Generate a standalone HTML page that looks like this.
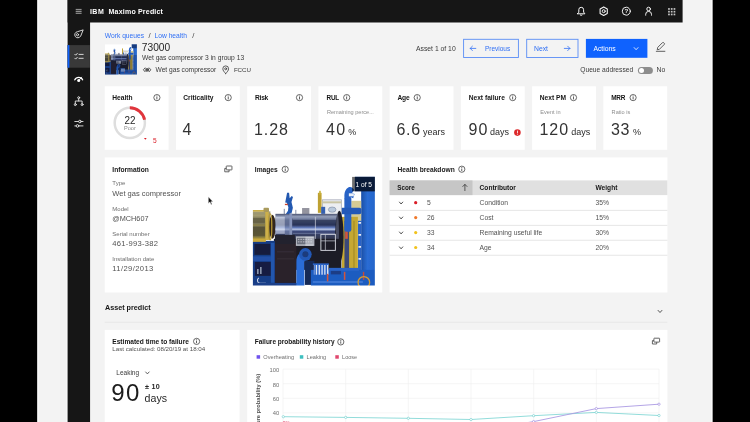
<!DOCTYPE html>
<html lang="en"><head><meta charset="utf-8"><title>IBM Maximo Predict</title>
<style>
*{box-sizing:border-box;margin:0;padding:0}
html,body{width:750px;height:422px;overflow:hidden;background:#000}
body{position:relative;font-family:"Liberation Sans",Arial,sans-serif;color:#161616;font-size:7px}
.abs,.t,.card,svg.i{position:absolute}
.t{white-space:nowrap;line-height:1;transform:translateY(-50%)}
.b{font-weight:bold}
.card{background:#fff}
.lbl{font-weight:bold;font-size:6.65px;color:#161616}
.sub{font-size:5.6px;color:#8d8d8d}
.big{font-size:16px;color:#333;letter-spacing:.6px}
.unit{font-size:9px;color:#2b2b2b}
.k{font-size:6px;color:#6f6f6f}
.v{font-size:7.6px;color:#525252}
.cell{font-size:6.75px;color:#525252}
.link{color:#2f6ff5}
svg.i{overflow:visible}
#root{position:absolute;left:0;top:0;width:750px;height:422px;overflow:hidden;filter:blur(.5px);will-change:transform}
</style></head><body>
<div id="root">
<svg class="i" style="left:0;top:0" width="750" height="422" viewBox="0 0 750 422">
<rect x="37.40" y="0.00" width="675.00" height="422.00" fill="#f3f3f3"/>
<rect x="37.40" y="0.00" width="1.00" height="422.00" fill="#ffffff"/>
<rect x="711.40" y="0.00" width="1.00" height="422.00" fill="#ffffff"/>
<rect x="66.60" y="0.00" width="1.00" height="422.00" fill="#fdfdfd"/>
<rect x="67.60" y="0.00" width="615.00" height="422.00" fill="#f3f3f3"/>
<rect x="90.10" y="22.50" width="592.50" height="0.90" fill="#fbfbfb"/>
<rect x="90.10" y="22.50" width="0.90" height="400.00" fill="#fbfbfb"/>
<rect x="67.60" y="0.00" width="615.00" height="22.50" fill="#161616"/>
<rect x="67.60" y="0.00" width="22.50" height="422.00" fill="#161616"/>
<rect x="67.60" y="45.10" width="22.30" height="22.60" fill="#393939"/>
<rect x="67.60" y="45.10" width="1.80" height="22.60" fill="#0f62fe"/>
<rect x="463.6" y="39.3" width="54.8" height="18.2" fill="none" stroke="#5a8df5" stroke-width=".9"/>
<rect x="526.7" y="39.3" width="51.3" height="18.2" fill="none" stroke="#5a8df5" stroke-width=".9"/>
<rect x="585.90" y="38.90" width="61.50" height="18.90" fill="#0f62fe"/>
<rect x="637.9" y="66.9" width="15" height="7.2" rx="3.6" fill="#8d8d8d"/>
<circle cx="641.5" cy="70.5" r="2.5" fill="#fff"/>
<rect x="104.70" y="86.30" width="63.90" height="63.50" fill="#fff"/>
<rect x="175.93" y="86.30" width="63.90" height="63.50" fill="#fff"/>
<rect x="247.16" y="86.30" width="63.90" height="63.50" fill="#fff"/>
<rect x="318.39" y="86.30" width="63.90" height="63.50" fill="#fff"/>
<rect x="389.62" y="86.30" width="63.90" height="63.50" fill="#fff"/>
<rect x="460.85" y="86.30" width="63.90" height="63.50" fill="#fff"/>
<rect x="532.08" y="86.30" width="63.90" height="63.50" fill="#fff"/>
<rect x="603.31" y="86.30" width="63.90" height="63.50" fill="#fff"/>
<rect x="104.70" y="157.40" width="135.00" height="135.10" fill="#fff"/>
<rect x="247.20" y="157.40" width="135.10" height="135.10" fill="#fff"/>
<rect x="389.60" y="157.40" width="277.80" height="135.10" fill="#fff"/>
<rect x="104.70" y="329.90" width="134.90" height="100.00" fill="#fff"/>
<rect x="247.20" y="329.90" width="420.20" height="100.00" fill="#fff"/>
<circle cx="517.4" cy="132.6" r="3.3" fill="#dc2a2c"/>
<rect x="389.60" y="180.40" width="277.80" height="14.70" fill="#e0e0e0"/>
<rect x="389.60" y="180.40" width="82.90" height="14.70" fill="#c6c6c6"/>
<rect x="389.60" y="209.90" width="277.80" height="0.80" fill="#e0e0e0"/>
<rect x="389.60" y="224.90" width="277.80" height="0.80" fill="#e0e0e0"/>
<rect x="389.60" y="239.80" width="277.80" height="0.80" fill="#e0e0e0"/>
<rect x="389.60" y="254.80" width="277.80" height="0.80" fill="#e0e0e0"/>
<circle cx="415.7" cy="202.7" r="1.6" fill="#da1e28"/>
<circle cx="415.7" cy="217.6" r="1.6" fill="#f0782a"/>
<circle cx="415.7" cy="232.6" r="1.6" fill="#f1c21b"/>
<circle cx="415.7" cy="247.5" r="1.6" fill="#f1c21b"/>
<rect x="104.70" y="321.80" width="562.70" height="0.80" fill="#e4e4e4"/>
<rect x="256.60" y="355.20" width="3.50" height="3.50" fill="#6f52ed"/>
<rect x="299.80" y="355.20" width="3.50" height="3.50" fill="#3dbfbf"/>
<rect x="335.30" y="355.20" width="3.50" height="3.50" fill="#e0486e"/>
</svg>
<!-- header -->
<!-- sidebar -->

<span class="t b" id="ibm" style="left:89.9px;top:11.3px;color:#fff;font-size:7px;letter-spacing:.5px">IBM</span>
<span class="t b" id="mp" style="left:108.6px;top:11.3px;color:#fff;font-size:7px;letter-spacing:.2px">Maximo Predict</span>

<!-- breadcrumb -->
<span class="t link" id="bc1" style="left:104.8px;top:35.6px;font-size:6.7px">Work queues</span>
<span class="t" style="left:148.4px;top:35.7px;font-size:7.6px;color:#393939">/</span>
<span class="t link" id="bc2" style="left:154.5px;top:35.6px;font-size:6.7px">Low health</span>
<span class="t" style="left:192.2px;top:35.7px;font-size:7.6px;color:#393939">/</span>

<span class="t" id="ttl" style="left:141.8px;top:47.5px;font-size:10.2px;color:#262626">73000</span>
<span class="t" id="sub1" style="left:142px;top:57.7px;font-size:6.7px;color:#393939">Wet gas compressor 3 in group 13</span>
<span class="t" id="sub2" style="left:155.5px;top:69.7px;font-size:6.65px;color:#393939">Wet gas compressor</span>
<span class="t" id="sub3" style="left:233.9px;top:69.7px;font-size:6.2px;color:#393939;letter-spacing:-.05px">FCCU</span>

<!-- top right controls -->
<span class="t" id="aof" style="left:416px;top:48.5px;font-size:6.8px;color:#393939">Asset 1 of 10</span>
<span class="t link" id="prev" style="left:484.9px;top:49.0px;font-size:6.5px">Previous</span>
<span class="t link" id="next" style="left:534px;top:49.0px;font-size:6.8px">Next</span>
<span class="t" id="act" style="left:593.4px;top:49.0px;font-size:6.8px;color:#fff">Actions</span>
<span class="t" id="qa" style="left:580.3px;top:70px;font-size:6.65px;color:#393939">Queue addressed</span>
<span class="t" id="no" style="left:656.5px;top:70.2px;font-size:6.8px;color:#393939">No</span>

<!-- KPI cards -->

<span class="t lbl" id="l1" style="left:112.3px;top:98px">Health</span>
<span class="t lbl" id="l2" style="left:183.3px;top:98px">Criticality</span>
<span class="t lbl" id="l3" style="left:254.9px;top:98px;letter-spacing:-.2px">Risk</span>
<span class="t lbl" id="l4" style="left:326.6px;top:98px;font-size:6.4px;letter-spacing:-.3px">RUL</span>
<span class="t lbl" id="l5" style="left:397.5px;top:98px;letter-spacing:-.2px">Age</span>
<span class="t lbl" id="l6" style="left:468.7px;top:98px">Next failure</span>
<span class="t lbl" id="l7" style="left:539.8px;top:98px">Next PM</span>
<span class="t lbl" id="l8" style="left:611.2px;top:98px;font-size:6.4px;letter-spacing:-.2px">MRR</span>

<span class="t sub" id="s4" style="left:326.9px;top:112.7px">Remaining perce...</span>
<span class="t sub" id="s7" style="left:540.3px;top:112.7px">Event in</span>
<span class="t sub" id="s8" style="left:611.6px;top:112.7px">Ratio is</span>

<span class="t" id="g22" style="left:124.4px;top:120.7px;font-size:9.9px;color:#262626;transform:translateY(-50%) scaleY(1.1)">22</span>
<span class="t" id="gpoor" style="left:124px;top:128.9px;font-size:5.6px;color:#8d8d8d">Poor</span>
<span class="t" id="g5" style="left:153px;top:140.8px;font-size:6.6px;color:#da1e28">5</span>

<span class="t big" id="b2" style="left:182.5px;top:130.4px">4</span>
<span class="t big" id="b3" style="left:254px;letter-spacing:.9px;top:130.4px">1.28</span>
<span class="t big" id="b4" style="left:326px;letter-spacing:1.4px;top:130.4px">40</span>
<span class="t unit" id="u4" style="left:348.2px;top:131.6px">%</span>
<span class="t big" id="b5" style="left:396.6px;top:130.4px">6.6</span>
<span class="t unit" id="u5" style="left:423px;top:131.6px">years</span>
<span class="t big" id="b6" style="left:468.4px;letter-spacing:1.2px;top:130.4px">90</span>
<span class="t unit" id="u6" style="left:490px;top:131.6px">days</span>
<span class="t big" id="b7" style="left:539.4px;letter-spacing:1px;top:130.4px">120</span>
<span class="t unit" id="u7" style="left:571.2px;top:131.6px">days</span>
<span class="t big" id="b8" style="left:611px;top:130.4px">33</span>
<span class="t unit" id="u8" style="left:633px;top:131.6px">%</span>

<!-- row 2 cards -->

<span class="t lbl" id="inf" style="left:112.3px;top:169.9px">Information</span>
<span class="t k" style="left:112.3px;top:183.2px">Type</span>
<span class="t v" id="v1" style="left:112.3px;top:193.6px;font-size:7.5px">Wet gas compressor</span>
<span class="t k" style="left:112.3px;top:209.2px">Model</span>
<span class="t v" id="v2" style="left:112.3px;top:219.0px;font-size:7.3px">@MCH607</span>
<span class="t k" style="left:112.3px;top:234.3px">Serial number</span>
<span class="t v" id="v3" style="left:112.3px;top:243.7px;letter-spacing:.27px">461-993-382</span>
<span class="t k" style="left:112.3px;top:258.9px">Installation date</span>
<span class="t v" id="v4" style="left:112.3px;top:268.6px;letter-spacing:.4px">11/29/2013</span>

<span class="t lbl" id="img" style="left:254.8px;top:169.9px">Images</span>
<span class="t lbl" id="hb" style="left:397.5px;top:169.9px">Health breakdown</span>

<!-- table -->
<span class="t b" id="th1" style="left:397.2px;top:187.6px;font-size:6.3px">Score</span>
<span class="t b" id="th2" style="left:479.6px;top:187.6px;font-size:6.6px">Contributor</span>
<span class="t b" id="th3" style="left:595.5px;top:187.6px;font-size:6.6px">Weight</span>

<span class="t cell" style="left:427.1px;top:202.7px">5</span>
<span class="t cell" style="left:427.1px;top:217.6px">26</span>
<span class="t cell" style="left:427.1px;top:232.6px">33</span>
<span class="t cell" style="left:427.1px;top:247.5px">34</span>
<span class="t cell" id="c1" style="left:479.6px;top:202.7px">Condition</span>
<span class="t cell" id="c2" style="left:479.6px;top:217.6px">Cost</span>
<span class="t cell" id="c3" style="left:479.6px;top:232.6px">Remaining useful life</span>
<span class="t cell" id="c4" style="left:479.6px;top:247.5px">Age</span>
<span class="t cell" id="w1" style="left:595.5px;top:202.7px">35%</span>
<span class="t cell" style="left:595.5px;top:217.6px">15%</span>
<span class="t cell" style="left:595.5px;top:232.6px">30%</span>
<span class="t cell" style="left:595.5px;top:247.5px">20%</span>

<!-- Asset predict -->
<span class="t b" id="ap" style="left:105px;top:307.5px;font-size:7.2px">Asset predict</span>


<span class="t lbl" id="etf" style="left:112.3px;top:341.6px;font-size:6.6px">Estimated time to failure</span>
<span class="t" id="lc" style="left:112.3px;top:349px;font-size:6.2px;color:#525252">Last calculated: 08/20/19 at 18:04</span>
<span class="t" id="leak" style="left:116.3px;top:372.7px;font-size:6.5px;color:#393939">Leaking</span>
<span class="t" id="b90" style="left:111.3px;top:392.8px;font-size:24px;color:#1c1c1c;letter-spacing:1.4px">90</span>
<span class="t b" id="pm" style="left:145px;top:387px;font-size:7.2px;color:#262626;letter-spacing:.3px">± 10</span>
<span class="t" id="days" style="left:144.6px;top:397.6px;font-size:10.6px;color:#262626">days</span>

<span class="t lbl" id="fph" style="left:254.7px;top:342px;font-size:6.5px">Failure probability history</span>
<span class="t" id="lg1" style="left:263.3px;top:357.7px;font-size:5.65px;color:#6f6f6f">Overheating</span>
<span class="t" id="lg2" style="left:306.6px;top:357.7px;font-size:5.6px;color:#6f6f6f">Leaking</span>
<span class="t" id="lg3" style="left:342.1px;top:357.7px;font-size:5.5px;color:#6f6f6f">Loose</span>


<svg width="0" height="0" style="position:absolute">
<defs>
<linearGradient id="cyl" x1="0" y1="0" x2="0" y2="1">
<stop offset="0" stop-color="#4a5370"/><stop offset=".1" stop-color="#9aa5c0"/><stop offset=".2" stop-color="#3a4464"/>
<stop offset=".36" stop-color="#2a3458"/><stop offset=".44" stop-color="#5c74b4"/><stop offset=".5" stop-color="#b9c6e6"/><stop offset=".56" stop-color="#3c4a7c"/>
<stop offset=".75" stop-color="#343a54"/><stop offset="1" stop-color="#1e2030"/>
</linearGradient>
<linearGradient id="colr" x1="0" y1="0" x2="1" y2="0">
<stop offset="0" stop-color="#1c4fa6"/><stop offset=".4" stop-color="#2a6cd4"/><stop offset="1" stop-color="#2262c6"/>
</linearGradient>
<linearGradient id="cage" x1="0" y1="0" x2="0" y2="1">
<stop offset="0" stop-color="#a39d76"/><stop offset=".3" stop-color="#8a8560"/><stop offset=".6" stop-color="#6c6748"/><stop offset=".88" stop-color="#77703f"/><stop offset="1" stop-color="#cfae3a"/>
</linearGradient>
<filter id="bl" x="-5%" y="-5%" width="110%" height="110%"><feGaussianBlur stdDeviation=".75"/></filter>
<symbol id="pic" viewBox="0 0 122 108.5" preserveAspectRatio="none">
<rect width="122" height="108.5" fill="#fff"/>
<g filter="url(#bl)">
<!-- right blue column -->
<rect x="108.3" y="-2" width="16" height="114" fill="url(#colr)"/>
<rect x="102" y="-2" width="22" height="16.5" fill="#173a80"/>
<rect x="105" y="40" width="3.4" height="56" fill="#2a62c4"/>
<path d="M105.6 58h2.600M105.6 70h2.600M105.6 82h2.600M105.6 46h2.6" stroke="#e6ecf6" stroke-width="1.6"/>
<!-- yellow panel -->
<rect x="98.5" y="24" width="9.8" height="20" fill="#d6cb94"/>
<rect x="89" y="40" width="16" height="54.5" fill="#c6a830"/>
<rect x="91.6" y="44" width="4.6" height="50" fill="#3b4978"/>
<rect x="92.3" y="51" width="2.6" height="11" fill="#d4563a"/>
<rect x="100.5" y="44" width="1.2" height="48" fill="#a48c28"/>
<!-- blue vertical pipe + valve -->
<rect x="91.5" y="20" width="7" height="35" rx="2" fill="#2560c4"/>
<path d="M91.8 22c-1-6 1-10 4-11.5 3-.8 4.5 .8 5.5 2.800l-2 2.6 2.4 1.2-1.4 4.4-3.3-1.500v4z" fill="#2762c6"/>
<rect x="87" y="31" width="21.5" height="6.4" rx="2" fill="#2259b8"/>
<rect x="96" y="16.5" width="5" height="3" fill="#e9eef7"/>
<!-- frame and gauge -->
<rect x="69.5" y="23" width="19" height="15.5" fill="#eceef2" stroke="#a9aebb" stroke-width=".8"/>
<rect x="69.5" y="24.5" width="19" height="2" fill="#c9c4a4"/>
<ellipse cx="79.3" cy="32.8" rx="3.8" ry="2.6" fill="#b9c9dc" stroke="#7b879f" stroke-width=".6"/>
<!-- yellow post -->
<rect x="65" y="16" width="3.7" height="20" fill="#bea132"/>
<rect x="66.3" y="14" width="1.6" height="4" fill="#c9b238"/>
<rect x="68.3" y="30" width="4" height="7" fill="#3560b0"/>
<!-- blue valve top-left -->
<path d="M34.2 16l2 0 .6 5.5 2-2.2 1.3 1-1.5 5 1.4 5.5-1.2 5-5 3.6-1.5-1.2 2.8-4.2 .4-3.5-1.6-4.5-1.6-.4z" fill="#2458b0"/>
<rect x="32" y="27" width="3" height="1.3" fill="#c4432f"/>
<!-- small bits on top of cylinder -->
<rect x="49.2" y="31.2" width="7.3" height="7" fill="#94949f"/>
<rect x="30.8" y="32" width="1.3" height="6" fill="#9aa3b8"/>
<rect x="42.3" y="33" width="1.2" height="5" fill="#9aa3b8"/>
<!-- left cage -->
<rect x="-1" y="34.5" width="18.5" height="28.5" fill="url(#cage)"/>
<rect x="-1" y="37.5" width="13" height="2" fill="#a39b70"/>
<rect x="-1" y="41" width="13" height="5" fill="#5a553c" opacity=".7"/>
<rect x="-1" y="50" width="13" height="9" fill="#504a30" opacity=".7"/>
<rect x="-1" y="47.5" width="13" height="1.6" fill="#8a7e48"/>
<rect x="12.4" y="33.5" width="3.4" height="29.5" fill="#cdb048"/>
<rect x="-1" y="33.2" width="14" height="1.6" fill="#c8ac44"/>
<rect x="10.6" y="31" width="5.5" height="4.2" rx="1" fill="#a99a5c"/>
<ellipse cx="19.5" cy="50" rx="3.2" ry="12" fill="#33261f"/>
<ellipse cx="17.3" cy="50" rx="1.6" ry="13" fill="none" stroke="#b89a34" stroke-width="1.3"/>
<!-- cylinder -->
<rect x="22.5" y="37" width="62" height="31" fill="url(#cyl)"/>
<rect x="23" y="40" width="9" height="17" fill="#dfe6f6" opacity=".6"/>
<rect x="32" y="38" width="5" height="26" fill="#7f8db6" opacity=".6"/>
<rect x="36.5" y="36.5" width="2.8" height="32" fill="#8794ba"/>
<rect x="40" y="41.5" width="44" height="1.2" fill="#8c99bc" opacity=".7"/>
<rect x="40" y="56" width="44" height="1" fill="#7d8ab0" opacity=".6"/>
<rect x="62" y="40" width="1.1" height="28" fill="#d7dbe6" opacity=".6"/>
<!-- dark ring -->
<ellipse cx="86.5" cy="60" rx="4.2" ry="26" fill="#1f1f2a"/>
<ellipse cx="84.6" cy="56" rx="1.5" ry="19" fill="#6a7394" opacity=".55"/>
<!-- dark lower center -->
<rect x="21" y="62" width="67.5" height="31" fill="#1e1e28"/>
<rect x="21" y="66" width="22.5" height="44" fill="#2a2129"/>
<rect x="22" y="58" width="20" height="9" fill="#23242f"/>
<path d="M24 75h17M24 82h17" stroke="#3c3640" stroke-width=".8"/>
<rect x="43" y="59.5" width="18.5" height="9.5" fill="#b9bdc7"/>
<rect x="44" y="61" width="16.5" height="6.5" fill="#4a4f5e" opacity=".7"/>
<path d="M45 62.500h14M45 65h14" stroke="#e1e3e8" stroke-width=".7" stroke-dasharray="1.5 1"/>
<rect x="68" y="57.5" width="14.5" height="16" fill="none" stroke="#d9dce4" stroke-width=".9"/>
<path d="M72.5 57.500v16M68 64h14.5" stroke="#c4c8d2" stroke-width=".7"/>
<rect x="52.5" y="60" width="8" height="9" fill="#dfe2e9" opacity=".55"/>
<!-- left bottom blue -->
<rect x="-1" y="64" width="23" height="46" fill="#173d86"/>
<rect x="-1" y="62" width="14" height="3" fill="#c9a93a"/>
<rect x="1.5" y="67" width="16" height="11" fill="#131d3c"/>
<rect x="0" y="79.5" width="20" height="5" fill="#2050a6"/>
<rect x="2" y="85" width="16" height="14" fill="#121f42"/>
<path d="M5 92v5M8 90v7" stroke="#d9e2f2" stroke-width="1"/>
<path d="M6 101a3 3 0 0 0 1 5.500h6" stroke="#d3dbec" stroke-width="1.1" fill="none"/>
<rect x="18" y="66" width="3.5" height="40" fill="#2256ac"/>
<rect x="0" y="106" width="44" height="4" fill="#1a3f8a"/>
<!-- blue elbow pipe -->
<path d="M43.5 112V85c0-7 4-10.5 10-10.500h3v8.500h-2.500c-1.6 0-2.5 1-2.5 2.600v26.400z" fill="#2a6cd6"/>
<circle cx="52.5" cy="77.5" r="6.3" fill="#2258b6"/>
<circle cx="52.5" cy="77.5" r="3" fill="#1a3a7c"/>
<rect x="52" y="84" width="9.5" height="24" fill="#182a56"/>
<!-- base / railing -->
<rect x="58" y="93" width="66" height="17" fill="#1f5cc0"/>
<rect x="61" y="87.3" width="14.6" height="10.5" fill="#dde5f4"/>
<path d="M62.2 87v11M65 87v11M67.8 87v11M70.6 87v11M73.4 87v11" stroke="#2a64c8" stroke-width="1.5"/>
<rect x="60" y="86.5" width="16" height="1.6" fill="#2a64c8"/>
<rect x="76" y="91" width="30" height="3" fill="#2a64c8"/>
<rect x="78" y="94" width="10" height="3.5" fill="#1b3e86"/>
<rect x="60" y="104.5" width="50" height="1.2" fill="#5b8fe6" opacity=".8"/>
<rect x="74" y="97" width="1.5" height="7.5" fill="#d1543c"/>
<rect x="91" y="95" width="1.5" height="8" fill="#d1543c"/>
<rect x="110" y="95" width="1.4" height="8" fill="#c2483a"/>
<circle cx="111" cy="105.5" r="5.8" fill="none" stroke="#d79a2c" stroke-width="1.3"/>
</g>
</symbol>
</defs>
</svg>
<svg class="i" style="left:0;top:0" width="750" height="422" viewBox="0 0 750 422"><use href="#pic" x="252.9" y="176.8" width="121.95" height="108.6"/><rect x="352.1" y="176.9" width="22.75" height="14.4" fill="#000" opacity=".56"/><use href="#pic" x="105" y="44.2" width="31.9" height="30.3"/><rect x="105" y="55" width="31.9" height="19.5" fill="#0a1840" opacity=".25"/></svg>
<span class="t" id="oneof" style="left:355.5px;top:185px;font-size:6.6px;color:#fff">1 of 5</span>
<svg class="i" style="left:0;top:0;font-family:'Liberation Sans',Arial,sans-serif" width="750" height="422" viewBox="0 0 750 422">
<path d="M283.0 369.1V422" stroke="#efefef" stroke-width=".6"/>
<path d="M345.7 369.1V422" stroke="#efefef" stroke-width=".6"/>
<path d="M408.3 369.1V422" stroke="#efefef" stroke-width=".6"/>
<path d="M471.0 369.1V422" stroke="#efefef" stroke-width=".6"/>
<path d="M533.7 369.1V422" stroke="#efefef" stroke-width=".6"/>
<path d="M596.4 369.1V422" stroke="#efefef" stroke-width=".6"/>
<path d="M659.0 369.1V422" stroke="#efefef" stroke-width=".6"/>
<path d="M283 369.1H659" stroke="#efefef" stroke-width=".6"/>
<path d="M283 383.7H659" stroke="#efefef" stroke-width=".6"/>
<path d="M283 398.3H659" stroke="#efefef" stroke-width=".6"/>
<path d="M283 412.9H659" stroke="#efefef" stroke-width=".6"/>
<text x="279.2" y="371.6" text-anchor="end" font-size="5.8" fill="#6f6f6f">100</text>
<text x="279.2" y="386.8" text-anchor="end" font-size="5.8" fill="#6f6f6f">80</text>
<text x="279.2" y="401.1" text-anchor="end" font-size="5.8" fill="#6f6f6f">60</text>
<text x="279.2" y="414.7" text-anchor="end" font-size="5.8" fill="#6f6f6f">40</text>
<text transform="translate(260.1 373.9) rotate(-90)" text-anchor="end" font-size="5.7" font-weight="bold" fill="#4a4a4a">Failure probability (%)</text>
<path d="M283.3 416.7L345.7 417.4L408.3 418.3L471 419.5L533.6 415.7L596.3 412.4L659 415.5" fill="none" stroke="#86d8d6" stroke-width=".9"/>
<path d="M471 432L533.6 421.6L596.3 408.6L659 404.2" fill="none" stroke="#ab9be3" stroke-width=".9"/>
<circle cx="283.3" cy="416.7" r="1.15" fill="#fff" stroke="#6fcfcc" stroke-width=".6"/>
<circle cx="345.7" cy="417.4" r="1.15" fill="#fff" stroke="#6fcfcc" stroke-width=".6"/>
<circle cx="408.3" cy="418.3" r="1.15" fill="#fff" stroke="#6fcfcc" stroke-width=".6"/>
<circle cx="471" cy="419.5" r="1.15" fill="#fff" stroke="#6fcfcc" stroke-width=".6"/>
<circle cx="533.6" cy="415.7" r="1.15" fill="#fff" stroke="#6fcfcc" stroke-width=".6"/>
<circle cx="596.3" cy="412.4" r="1.15" fill="#fff" stroke="#6fcfcc" stroke-width=".6"/>
<circle cx="659" cy="415.5" r="1.15" fill="#fff" stroke="#6fcfcc" stroke-width=".6"/>
<circle cx="471" cy="432" r="1.15" fill="#fff" stroke="#9883dd" stroke-width=".6"/>
<circle cx="533.6" cy="421.6" r="1.15" fill="#fff" stroke="#9883dd" stroke-width=".6"/>
<circle cx="596.3" cy="408.6" r="1.15" fill="#fff" stroke="#9883dd" stroke-width=".6"/>
<circle cx="659" cy="404.2" r="1.15" fill="#fff" stroke="#9883dd" stroke-width=".6"/>
<text x="282.6" y="425" font-size="5.4" fill="#e0486e">0%</text>
</svg>
<svg class="i" style="left:0;top:0" width="750" height="422" viewBox="0 0 750 422">
<rect x="75.7" y="8.90" width="5.9" height="1.2" fill="#8f8f8f"/>
<rect x="75.7" y="10.80" width="5.9" height="1.2" fill="#8f8f8f"/>
<rect x="75.7" y="12.70" width="5.9" height="1.2" fill="#8f8f8f"/>
<g fill="none" stroke="#e8e8e8" stroke-width=".9" stroke-linecap="round" stroke-linejoin="round" stroke-width=".85"><path d="M82.8 30 L77.5 31.7 A3.1 3.1 0 1 0 80.5 36.4 Z"/><circle cx="77.5" cy="34.7" r="1.1"/></g>
<g fill="none" stroke="#e8e8e8" stroke-width=".9" stroke-linecap="round" stroke-linejoin="round"><path d="M74.8 54.300l.9 .9 1.6-1.8"/><path d="M79 54.400h4.2"/><path d="M74.8 58.200l.9 .9 1.6-1.8"/><path d="M79 58.300h4.2"/></g>
<g fill="none" stroke="#fff" stroke-width="1.3" stroke-linecap="round"><path d="M74.8 79.8 A4.3 4.3 0 0 1 82.6 79.8"/><path d="M78.9 80.4 L81.6 77.2" stroke-width=".9"/></g><circle cx="78.7" cy="80.6" r="1.5" fill="#fff"/>
<g fill="none" stroke="#e8e8e8" stroke-width=".9" stroke-linecap="round" stroke-linejoin="round" stroke-width=".8"><circle cx="78.7" cy="97.7" r="1"/><path d="M78.7 98.800v2.200M75.3 103.600v-2.600h6.800v2.6"/><circle cx="75.3" cy="104.6" r="1"/><circle cx="82.1" cy="104.6" r="1"/></g>
<g fill="none" stroke="#e8e8e8" stroke-width=".9" stroke-linecap="round" stroke-linejoin="round" stroke-width=".8"><path d="M74.8 121.500h3.600M81.4 121.500h1.600M74.8 125.900h1.200M79 125.900h4"/><circle cx="79.9" cy="121.5" r="1.3"/><circle cx="77.5" cy="125.9" r="1.3"/></g>
<g fill="none" stroke="#f4f4f4" stroke-width="1" stroke-linecap="round" stroke-linejoin="round"><path d="M577.5 13.800h7.400l-1.3-1.700v-2.400a2.4 2.4 0 0 0 -4.8 0v2.400z"/><path d="M580.3 15.100q.9 .9 1.8 0"/></g>
<g fill="none" stroke="#f4f4f4" stroke-width="1" stroke-linecap="round" stroke-linejoin="round"><path d="M603.7 6.900l3.6 2.100v4.400l-3.6 2.100l-3.6-2.100v-4.400z" stroke-width="1.1"/><circle cx="603.7" cy="11.2" r="1.5"/></g>
<g fill="none" stroke="#f4f4f4" stroke-width="1" stroke-linecap="round" stroke-linejoin="round"><circle cx="626.3" cy="11.2" r="4"/></g><text x="626.3" y="13.4" text-anchor="middle" font-family="Liberation Sans,Arial,sans-serif" font-size="6.2" font-weight="bold" fill="#f4f4f4">?</text>
<g fill="none" stroke="#f4f4f4" stroke-width="1" stroke-linecap="round" stroke-linejoin="round"><circle cx="648.6" cy="9" r="1.8"/><path d="M645.7 15.200v-.9a2.9 2.9 0 0 1 5.8 0v.9"/></g>
<rect x="668.10" y="8.10" width="1.7" height="1.7" fill="#c6c6c6"/>
<rect x="668.10" y="10.85" width="1.7" height="1.7" fill="#c6c6c6"/>
<rect x="668.10" y="13.60" width="1.7" height="1.7" fill="#c6c6c6"/>
<rect x="670.85" y="8.10" width="1.7" height="1.7" fill="#c6c6c6"/>
<rect x="670.85" y="10.85" width="1.7" height="1.7" fill="#c6c6c6"/>
<rect x="670.85" y="13.60" width="1.7" height="1.7" fill="#c6c6c6"/>
<rect x="673.60" y="8.10" width="1.7" height="1.7" fill="#c6c6c6"/>
<rect x="673.60" y="10.85" width="1.7" height="1.7" fill="#c6c6c6"/>
<rect x="673.60" y="13.60" width="1.7" height="1.7" fill="#c6c6c6"/>
<g fill="none" stroke="#393939" stroke-width=".8" stroke-linecap="round" stroke-linejoin="round"><path d="M145 67.900l-1.6 1.9 1.6 1.900M149.2 67.900l1.6 1.9-1.6 1.9"/><ellipse cx="146.3" cy="69.8" rx=".55" ry="1.7"/><ellipse cx="147.9" cy="69.8" rx=".55" ry="1.7"/></g>
<g fill="none" stroke="#393939" stroke-width=".8" stroke-linecap="round" stroke-linejoin="round"><path d="M225.7 73.600c-1.6-1.9-2.9-3.2-2.9-4.800a2.9 2.9 0 0 1 5.8 0c0 1.6-1.3 2.9-2.9 4.800z"/><circle cx="225.7" cy="68.8" r="1"/></g>
<g fill="none" stroke="#2f6ff5" stroke-width=".8" stroke-linecap="round" stroke-linejoin="round"><path d="M475.8 48.400h-5.600M472.4 46.200l-2.2 2.2 2.2 2.2"/><path d="M564.3 48.400h5.600M567.7 46.200l2.2 2.2-2.2 2.2"/></g>
<path d="M633.90 47.30L636.10 49.70L638.30 47.30" fill="none" stroke="#fff" stroke-width="0.8"/>
<g fill="none" stroke="#393939" stroke-width=".8" stroke-linecap="round" stroke-linejoin="round" stroke="#262626" stroke-width="1"><path d="M656.3 51.300h8.6"/><path d="M657.3 49.300l.5-2 4.6-4.600a.9 .9 0 0 1 1.3 0l.5 .5a.9 .9 0 0 1 0 1.300l-4.6 4.600z"/></g>
<circle cx="156.9" cy="97.6" r="3.1" fill="none" stroke="#393939" stroke-width=".75"/><rect x="156.50" y="97.00" width=".8" height="2.4" fill="#393939"/><rect x="156.45" y="95.60" width=".9" height=".9" fill="#393939"/>
<circle cx="228.2" cy="97.6" r="3.1" fill="none" stroke="#393939" stroke-width=".75"/><rect x="227.80" y="97.00" width=".8" height="2.4" fill="#393939"/><rect x="227.75" y="95.60" width=".9" height=".9" fill="#393939"/>
<circle cx="299.5" cy="97.6" r="3.1" fill="none" stroke="#393939" stroke-width=".75"/><rect x="299.10" y="97.00" width=".8" height="2.4" fill="#393939"/><rect x="299.05" y="95.60" width=".9" height=".9" fill="#393939"/>
<circle cx="346.7" cy="97.6" r="3.1" fill="none" stroke="#393939" stroke-width=".75"/><rect x="346.30" y="97.00" width=".8" height="2.4" fill="#393939"/><rect x="346.25" y="95.60" width=".9" height=".9" fill="#393939"/>
<circle cx="417.2" cy="97.6" r="3.1" fill="none" stroke="#393939" stroke-width=".75"/><rect x="416.80" y="97.00" width=".8" height="2.4" fill="#393939"/><rect x="416.75" y="95.60" width=".9" height=".9" fill="#393939"/>
<circle cx="512.7" cy="97.6" r="3.1" fill="none" stroke="#393939" stroke-width=".75"/><rect x="512.30" y="97.00" width=".8" height="2.4" fill="#393939"/><rect x="512.25" y="95.60" width=".9" height=".9" fill="#393939"/>
<circle cx="573.5" cy="97.6" r="3.1" fill="none" stroke="#393939" stroke-width=".75"/><rect x="573.10" y="97.00" width=".8" height="2.4" fill="#393939"/><rect x="573.05" y="95.60" width=".9" height=".9" fill="#393939"/>
<circle cx="633.1" cy="97.6" r="3.1" fill="none" stroke="#393939" stroke-width=".75"/><rect x="632.70" y="97.00" width=".8" height="2.4" fill="#393939"/><rect x="632.65" y="95.60" width=".9" height=".9" fill="#393939"/>
<circle cx="285.2" cy="169.3" r="3.1" fill="none" stroke="#393939" stroke-width=".75"/><rect x="284.80" y="168.70" width=".8" height="2.4" fill="#393939"/><rect x="284.75" y="167.30" width=".9" height=".9" fill="#393939"/>
<circle cx="461.8" cy="169.2" r="3.1" fill="none" stroke="#393939" stroke-width=".75"/><rect x="461.40" y="168.60" width=".8" height="2.4" fill="#393939"/><rect x="461.35" y="167.20" width=".9" height=".9" fill="#393939"/>
<circle cx="196.6" cy="341.4" r="3.1" fill="none" stroke="#393939" stroke-width=".75"/><rect x="196.20" y="340.80" width=".8" height="2.4" fill="#393939"/><rect x="196.15" y="339.40" width=".9" height=".9" fill="#393939"/>
<circle cx="340.8" cy="341.9" r="3.1" fill="none" stroke="#393939" stroke-width=".75"/><rect x="340.40" y="341.30" width=".8" height="2.4" fill="#393939"/><rect x="340.35" y="339.90" width=".9" height=".9" fill="#393939"/>
<g fill="none" stroke="#4a4a4a" stroke-width=".85" stroke-linejoin="round"><rect x="226.25" y="166.00" width="5.7" height="3.9" rx=".4"/><path d="M226.25 168.40H224.75V171.80H229.05V169.90"/></g>
<g fill="none" stroke="#4a4a4a" stroke-width=".85" stroke-linejoin="round"><rect x="653.90" y="338.20" width="5.7" height="3.9" rx=".4"/><path d="M653.90 340.60H652.40V344.00H656.70V342.10"/></g>
<path d="M657.80 310.10L660.00 312.50L662.20 310.10" fill="none" stroke="#393939" stroke-width="0.85"/>
<path d="M145.40 371.70L147.40 373.90L149.40 371.70" fill="none" stroke="#393939" stroke-width="0.8"/>
<path d="M399.20 201.80L401.10 204.00L403.00 201.80" fill="none" stroke="#333" stroke-width="0.85"/>
<path d="M399.20 216.70L401.10 218.90L403.00 216.70" fill="none" stroke="#333" stroke-width="0.85"/>
<path d="M399.20 231.70L401.10 233.90L403.00 231.70" fill="none" stroke="#333" stroke-width="0.85"/>
<path d="M399.20 246.60L401.10 248.80L403.00 246.60" fill="none" stroke="#333" stroke-width="0.85"/>
<g fill="none" stroke="#393939" stroke-width=".8" stroke-linecap="round" stroke-linejoin="round"><path d="M464.9 190.600v-6M462.8 186.500l2.1-2.1 2.1 2.1"/></g>
<circle cx="129.8" cy="122.9" r="15.1" fill="none" stroke="#dedede" stroke-width="2.5"/>
<path d="M129.8 107.80000000000001A15.1 15.1 0 0 1 144.57 119.76" fill="none" stroke="#e0353c" stroke-width="2.9"/>
<path d="M144 138.100h2.700l-1.350 1.700z" fill="#da1e28"/>
<rect x="517" y="130.6" width=".8" height="2.5" fill="#fff"/><rect x="517" y="133.7" width=".8" height=".9" fill="#fff"/>
<path d="M208.3 196.800v6.600l1.6-1.4 1.2 2.7 1-.45-1.2-2.600h2.100z" fill="#111" stroke="#fff" stroke-width=".45"/>
</svg>
</div>
</body></html>
